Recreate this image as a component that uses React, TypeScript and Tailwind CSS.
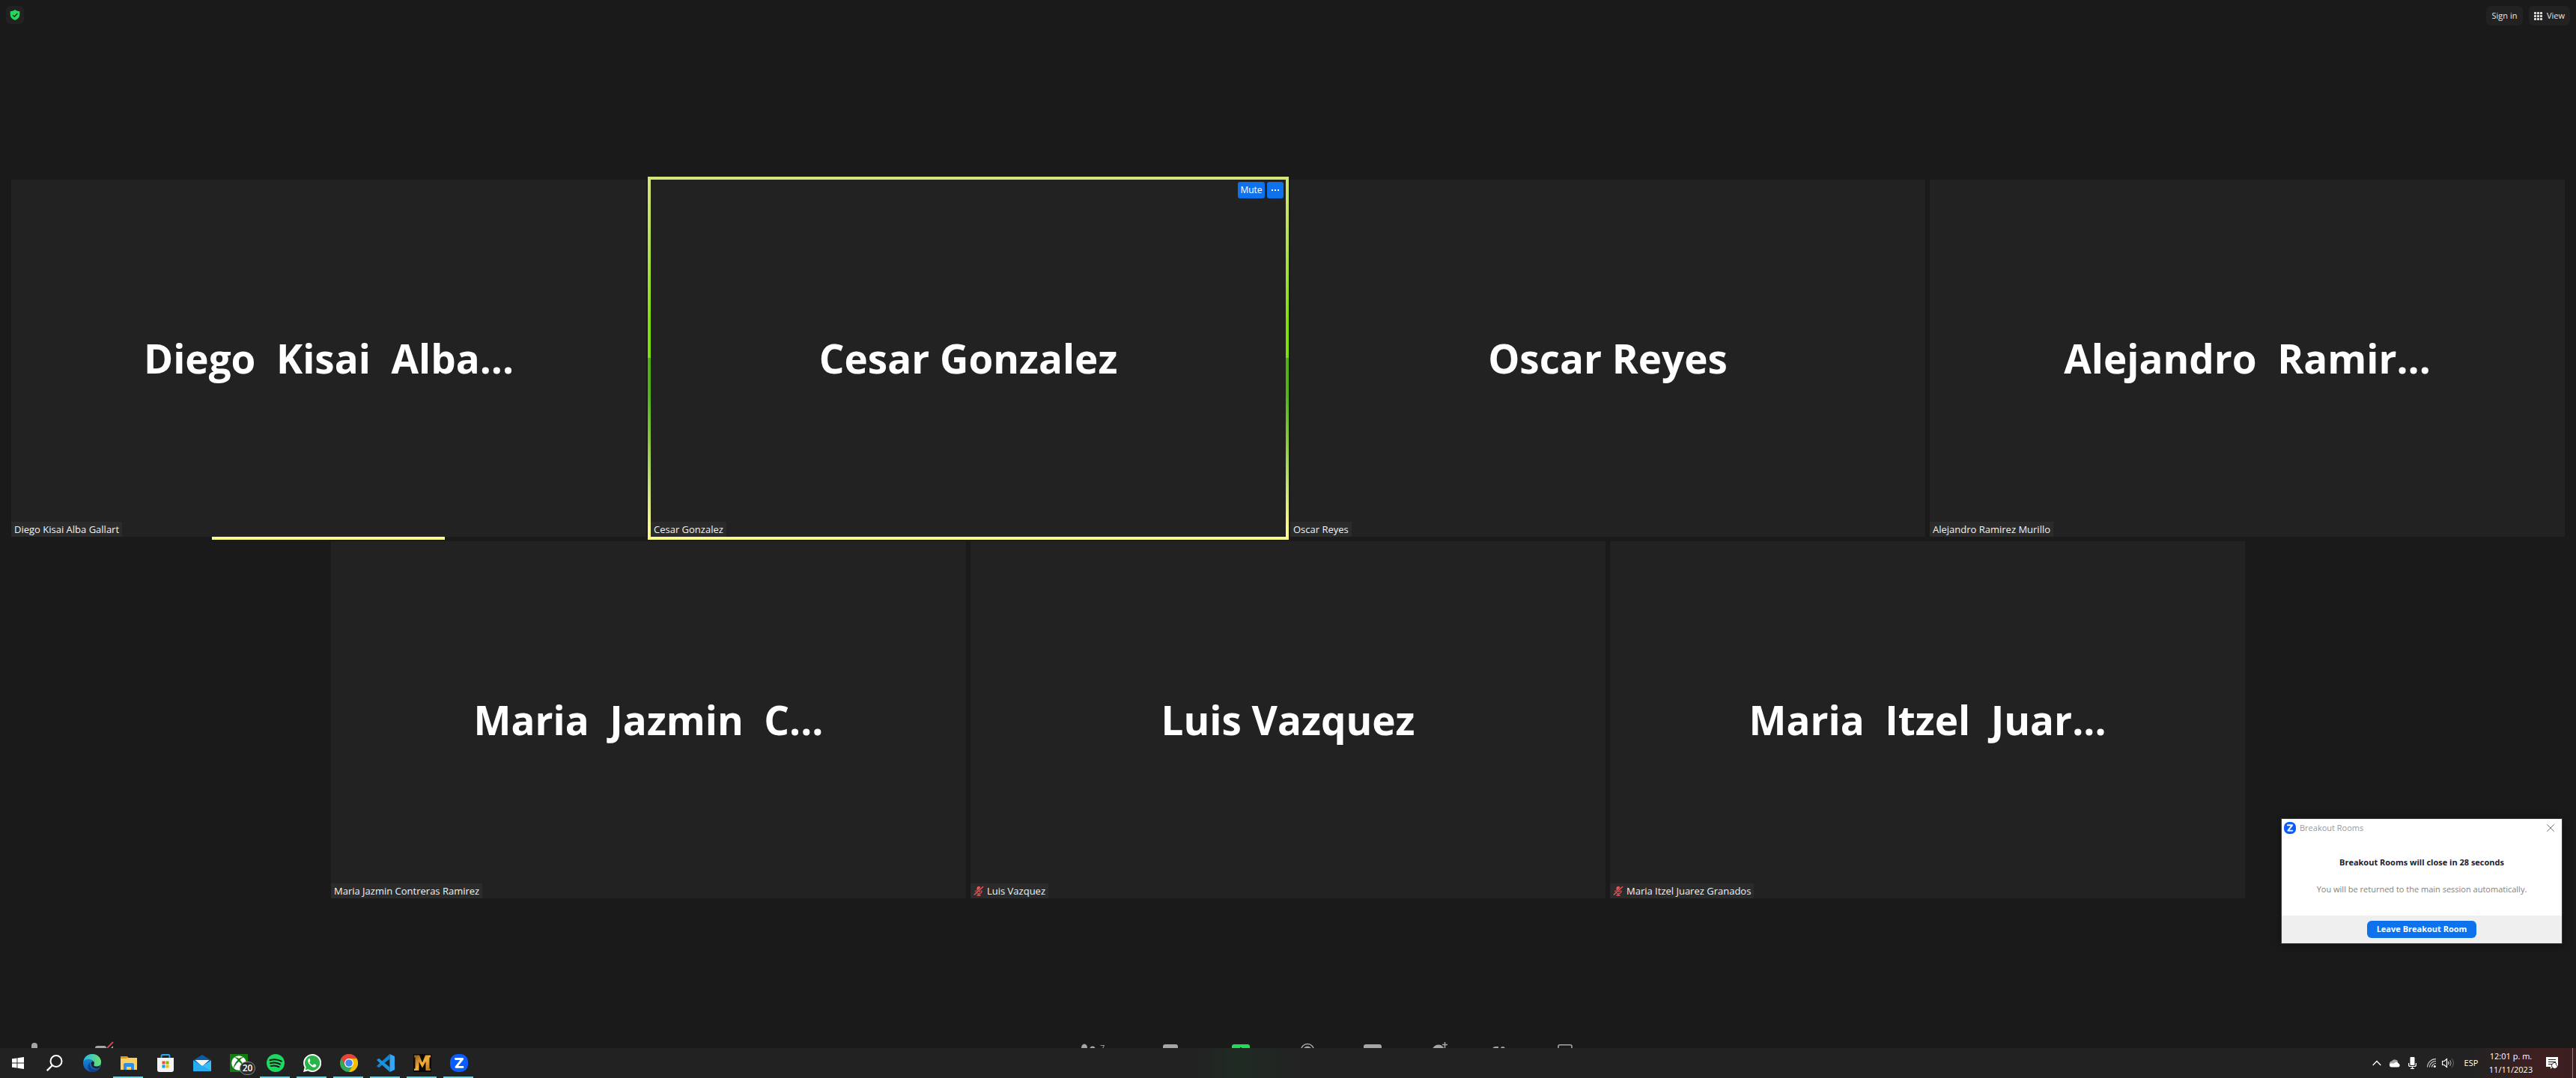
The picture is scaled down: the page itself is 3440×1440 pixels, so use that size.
import React from "react";

type Person = { name: string; title: string; muted?: boolean };

const topRow: Person[] = [
  { name: "Diego Kisai Alba Gallart", title: "Diego\u00a0 Kisai\u00a0 Alba..." },
  { name: "Cesar Gonzalez", title: "Cesar Gonzalez" },
  { name: "Oscar Reyes", title: "Oscar Reyes" },
  { name: "Alejandro Ramirez Murillo", title: "Alejandro\u00a0 Ramir..." },
];

const bottomRow: Person[] = [
  { name: "Maria Jazmin Contreras Ramirez", title: "Maria\u00a0 Jazmin\u00a0 C..." },
  { name: "Luis Vazquez", title: "Luis Vazquez", muted: true },
  { name: "Maria Itzel Juarez Granados", title: "Maria\u00a0 Itzel\u00a0 Juar...", muted: true },
];

function MutedMic() {
  return (
    <svg viewBox="0 0 14 14" className="h-3.5 w-3.5" aria-hidden="true">
      <rect x="4.5" y="1" width="5" height="8" rx="2.5" fill="#f0555a" />
      <path d="M3 6.5V7a4 4 0 0 0 8 0v-.5M7 11v2M4.5 13h5" fill="none" stroke="#f0555a" strokeWidth="1.3" />
      <path d="M.8 12.6 13 1.2" stroke="#2b2b2b" strokeWidth="2.6" />
      <path d="M.8 12.6 13 1.2" stroke="#f0555a" strokeWidth="1.4" />
    </svg>
  );
}

function Tile({ person, active, speaking }: { person: Person; active?: boolean; speaking?: boolean }) {
  return (
    <article className="relative flex aspect-[848/477] w-[calc((100%-18px)/4)] items-center justify-center bg-[#222222]">
      {active && (
        <>
          <div className="absolute -inset-1 bg-[linear-gradient(to_bottom,#d5e57a_0%,#c3e35a_12%,#9fe032_28%,#83dd0c_40%,#83dd0c_50%,#4fb30d_50%,#53b517_60%,#86c83a_72%,#c9e273_85%,#fbf88b_97%)]" />
          <div className="absolute inset-0 bg-[#222222]" />
          <div className="absolute right-[3px] top-[3px] flex gap-[3px] text-xs">
            <button className="h-[22px] w-9 rounded-[3px] bg-[#0e72ed] text-white">Mute</button>
            <button aria-label="More options" className="flex h-[22px] w-[22px] items-center justify-center gap-0.5 rounded-[3px] bg-[#0e72ed]">
              <i className="h-0.5 w-0.5 bg-white" />
              <i className="h-0.5 w-0.5 bg-white" />
              <i className="h-0.5 w-0.5 bg-white" />
            </button>
          </div>
        </>
      )}
      {speaking && <div className="absolute left-[268px] top-full h-1 w-[311px] bg-[#fdfb8e]" />}
      <h2 className="relative whitespace-nowrap text-[53px] font-bold leading-none text-white">{person.title}</h2>
      <div className="absolute bottom-0 left-0 flex h-5 items-center gap-1 bg-[#2b2b2b] px-1 text-[13px] leading-5 text-[#f2f2f2]">
        {person.muted && <MutedMic />}
        <span>{person.name}</span>
      </div>
    </article>
  );
}

function ZoomArt() {
  return (
    <>
      <rect width="24" height="24" rx="10" fill="#0b5cff" />
      <path d="M7.4 6.5h9.2l-8.6 10.900h9" fill="none" stroke="#fff" strokeWidth="2.9" strokeLinejoin="round" strokeLinecap="round" />
    </>
  );
}

const g = "#a6a6a6";
const tools = [
  { label: "Participants", w: "w-[100px]", art: <><ellipse cx="38" cy="14" rx="4" ry="5.5" fill={g} /><circle cx="49" cy="15" r="3.5" fill={g} /></> },
  { label: "Chat", w: "w-[106px]", art: <rect x="43" y="9" width="20" height="18" rx="3" fill={g} /> },
  { label: "Share Screen", w: "w-[82px]", art: <><rect x="29" y="9" width="24" height="18" rx="3" fill="#23d959" /><path d="M41 13v6" stroke="#1a1a1a" strokeWidth="2" /></> },
  { label: "Record", w: "w-[98px]", art: <><circle cx="48" cy="17" r="8.5" fill="none" stroke={g} strokeWidth="1.6" /><circle cx="48" cy="17" r="5.5" fill={g} /></> },
  { label: "Whiteboard", w: "w-[74px]", art: <rect x="25" y="9" width="24" height="18" rx="3" fill={g} /> },
  { label: "Reactions", w: "w-[106px]", art: <><circle cx="51" cy="18" r="8.5" fill={g} /><path d="M59.5 5.5v8M55.5 9.5h8" stroke="#1a1a1a" strokeWidth="4" /><path d="M59.5 6v8M56 9.5h7" stroke={g} strokeWidth="1.5" /></> },
  { label: "Apps", w: "w-[50px]", art: <path d="M18 16c0-2 1.5-3 3-3h4M28.5 16c0-2 .8-3 2.300-3s2.300 1 2.300 3" fill="none" stroke={g} strokeWidth="1.8" /> },
  { label: "Notes", w: "w-[128px]", art: <rect x="55" y="9.8" width="18" height="16" rx="2" fill="none" stroke={g} strokeWidth="1.6" /> },
];

function Toolbar() {
  return (
    <nav aria-label="Meeting controls" className="flex h-3.5 shrink-0 overflow-hidden">
      <button aria-label="Unmute" className="w-[92px]">
        <svg viewBox="0 0 92 14" className="h-3.5 w-full"><rect x="42" y="7" width="8" height="16" rx="4" fill={g} /></svg>
      </button>
      <button aria-label="Start Video" className="w-[92px]">
        <svg viewBox="0 0 92 14" className="h-3.5 w-full">
          <rect x="35" y="11" width="15" height="12" rx="3" fill={g} />
          <path d="M55 15l4-4v4z" fill={g} />
          <path d="M59 6 50 15" stroke="#e0484d" strokeWidth="1.8" />
        </svg>
      </button>
      <div className="mr-[60px] flex flex-1 justify-center">
        {tools.map((t, i) => (
          <button key={t.label} aria-label={t.label} className={t.w + " relative overflow-hidden"}>
            <svg width="100%" height="14" className="block">{t.art}</svg>
            {i === 0 && <span className="absolute left-[59px] top-[7px] text-[11px] leading-[14px] text-[#a6a6a6]">7</span>}
          </button>
        ))}
      </div>
    </nav>
  );
}

const apps: { label: string; open?: boolean; art: React.ReactNode }[] = [
  {
    label: "Edge",
    art: (
      <>
        <defs>
          <linearGradient id="eg" x1="0" x2="1"><stop offset="0" stopColor="#2bb5e8" /><stop offset="1" stopColor="#6be36a" /></linearGradient>
          <linearGradient id="eb" x1="0" x2="0" y1="0" y2="1"><stop offset="0" stopColor="#1c9ae0" /><stop offset="1" stopColor="#0b55b0" /></linearGradient>
        </defs>
        <circle cx="12" cy="12" r="12" fill="url(#eb)" />
        <path d="M.6 9.500C2 3.500 6.500 0 12 0c7 0 12 5 12 10.500 0 4-3 6-6 6-2.500 0-4-1-3.700-2 1.200-1.300 1-3.500-.3-5C11 6 4 5.500.6 9.500z" fill="url(#eg)" />
        <path d="M9 11c-1.500 5 2 9.500 7 9.800 2.600.1 4.500-.6 6-2C19.500 23 15 24.500 11 23.800 6 22 5.500 14.500 9 11z" fill="#0d3f8c" />
        <path d="M10.500 12c.5-1.700 2.300-2.600 3.800-1.500.6 1.400.5 2.900-.2 3.900-.3 1.200 1.300 2.300 3.700 2.300 2 0 3.600-.7 4.700-1.600l-.6 2.600c-3.600 3-11 1.800-11.400-5.700z" fill="#222" />
      </>
    ),
  },
  {
    label: "File Explorer",
    open: true,
    art: (
      <>
        <path d="M1 3h9l2 2.500H1z" fill="#d9920b" />
        <path d="M1 5h22v16H1z" fill="#fbcf63" />
        <path d="M1 3h8v3H1z" fill="#dd9a12" />
        <path d="M5 21v-7.500L6.500 12h11l1.500 1.500V21h-4v-4H9v4z" fill="#2f8fe0" />
      </>
    ),
  },
  {
    label: "Microsoft Store",
    art: (
      <>
        <path d="M6.500 7V2.500A1.500 1.500 0 0 1 8 1h8a1.500 1.500 0 0 1 1.500 1.500V7" fill="none" stroke="#23a9ee" strokeWidth="1.8" />
        <path d="M1 5h22v16a3 3 0 0 1-3 3H4a3 3 0 0 1-3-3z" fill="#f4f4f6" />
        <path d="M7.500 9.500h4v4h-4z" fill="#f25022" /><path d="M12.500 9.500h4v4h-4z" fill="#7fba00" />
        <path d="M7.500 14.500h4v4h-4z" fill="#00a4ef" /><path d="M12.500 14.500h4v4h-4z" fill="#ffb900" />
      </>
    ),
  },
  {
    label: "Mail",
    art: (
      <>
        <path d="M0 8.500 12 1l12 7.500V14H0z" fill="#0a5ba5" />
        <path d="M2.500 8h19L12 16.500z" fill="#f3f3f3" />
        <path d="M0 8.500 12 16l12 7H0z" fill="#1fa3ea" /><path d="M24 8.500V23L12 16z" fill="#38bdf5" />
        <path d="M0 8.500 24 23H0z" fill="#29abf0" />
      </>
    ),
  },
  {
    label: "Xbox",
    art: (
      <>
        <path d="M0 0h24v24H0z" fill="#107c10" />
        <circle cx="12" cy="12" r="9.8" fill="#fff" />
        <path d="M5.500 4.500C8 3.600 10.500 5 12 6c1.500-1 4-2.400 6.500-1.500-2 .5-4.500 2.500-5 3.500 3 3 6 8 5.500 11.500-1.500-4-5-8-7-9.500-2 1.500-5.500 5.500-7 9.500C4.500 16 7.500 11 10.500 8c-.5-1-3-3-5-3.500z" fill="#107c10" />
      </>
    ),
  },
  {
    label: "Spotify",
    open: true,
    art: (
      <>
        <circle cx="12" cy="12" r="12" fill="#1ed760" />
        <path d="M4.500 8.200c5-1.500 11-1 15.300 1.500M5 12.300c4.500-1.300 9.500-.7 13 1.400M5.700 16c3.700-1 7.700-.6 10.700 1.200" fill="none" stroke="#161616" strokeWidth="2" strokeLinecap="round" />
      </>
    ),
  },
  {
    label: "WhatsApp",
    open: true,
    art: (
      <>
        <path d="M12 0a12 12 0 0 0-10.300 18L0 24l6.200-1.600A12 12 0 1 0 12 0z" fill="#fff" />
        <path d="M12 2a10 10 0 0 0-8.300 15.500l-1 3.800 3.900-1A10 10 0 1 0 12 2z" fill="#28b446" />
        <path d="M8.800 6.500c-.4-.7-1.300-.6-1.900.1C4.500 9.500 8 14.500 11.500 16.700c3 1.700 5.300 1 5.800-1.200.2-.9 0-1-.6-1.300l-1.900-.9c-.5-.2-.7 0-1 .4l-.8 1c-.3.300-.6.300-1 .1-1.600-.8-2.900-2-3.700-3.500-.2-.4-.1-.6.200-.9.600-.7 1-1 .8-1.600z" fill="#fff" />
      </>
    ),
  },
  {
    label: "Chrome",
    open: true,
    art: (
      <>
        <circle cx="12" cy="12" r="12" fill="#34a853" />
        <path d="M1.600 6A12 12 0 0 1 22.400 6H12L6.800 15z" fill="#ea4335" />
        <path d="M22.400 6A12 12 0 0 1 12 24l5.200-9L12 6z" fill="#fbbc05" />
        <circle cx="12" cy="12" r="6" fill="#fff" /><circle cx="12" cy="12" r="4.8" fill="#4285f4" />
      </>
    ),
  },
  {
    label: "Visual Studio Code",
    open: true,
    art: (
      <>
        <path d="M17.500 0 24 3v18l-6.500 3z" fill="#35a7f2" />
        <path d="M17.500 0v6.500L3 18.200 0 16z" fill="#1584cf" /><path d="M17.500 24v-6.500L3 5.800 0 8z" fill="#1c93dd" />
      </>
    ),
  },
  {
    label: "Game",
    open: true,
    art: (
      <>
        <defs><linearGradient id="gm" x1="0" x2="1" y1="0" y2="1"><stop offset="0" stopColor="#8a5312" /><stop offset=".5" stopColor="#f5b03c" /><stop offset="1" stopColor="#b36d19" /></linearGradient></defs>
        <path d="M0 0h24v24H0z" fill="#0b0806" />
        <path d="M1 1.500h7l4 10 4-10h7v3h-1.500v15H23v2.500h-6.500V10L12 18.500 7.500 10v12H1v-2.500h1.500v-15H1z" fill="url(#gm)" />
      </>
    ),
  },
  { label: "Zoom", open: true, art: <ZoomArt /> },
];

function Taskbar() {
  return (
    <footer className="flex h-10 shrink-0 items-stretch bg-[linear-gradient(to_right,#222_0%,#222_46.5%,#1f2b22_48%,#222_50.5%,#222_96%,#3f2021_98.5%,#3b1e20_100%)] text-[11px] text-white">
      <button aria-label="Start" className="flex w-12 items-center justify-center">
        <svg viewBox="0 0 16 16" className="h-4 w-4" fill="#fff"><path d="M0 2.300 6.500 1.400v6.200H0zM7.400 1.300 16 0v7.600H7.400zM0 8.400h6.500v6.200L0 13.700zM7.400 8.400H16V16l-8.600-1.300z" /></svg>
      </button>
      <button aria-label="Search" className="flex w-[50px] items-center justify-center">
        <svg viewBox="0 0 22 22" className="h-[22px] w-[22px]" fill="none" stroke="#fff" strokeWidth="2"><circle cx="13" cy="8.5" r="7.5" /><path d="M8 14 .8 21.200" strokeWidth="2.3" /></svg>
      </button>
      {apps.map((a) => (
        <button key={a.label} aria-label={a.label} className="relative flex w-[49px] items-center justify-center">
          <svg viewBox="0 0 24 24" className="h-6 w-6">{a.art}</svg>
          {a.label === "Xbox" && <span className="absolute bottom-1 right-0.5 flex h-[18px] w-[21px] items-center justify-center rounded-full border border-[#8a8a8a] bg-[#2b2b2b] text-xs font-semibold leading-none">20</span>}
          {a.open && <i className="absolute bottom-0 left-1 h-0.5 w-10 bg-[#76d0dc]" />}
        </button>
      ))}
      <div className="ml-auto flex items-center">
        <button aria-label="Show hidden icons" className="mr-2.5">
          <svg viewBox="0 0 12 8" className="h-2 w-3"><path d="M.7 7 6 1.500 11.300 7" fill="none" stroke="#fff" strokeWidth="1.3" /></svg>
        </button>
        <button aria-label="OneDrive" className="mr-2.5">
          <svg viewBox="0 0 16 12" className="h-3 w-4"><path d="M1.500 9A3.500 3.500 0 0 1 4 3.500 5 5 0 0 1 12.500 4z" fill="#a5a5a5" /><path d="M3 11.500a2.700 2.700 0 0 1 0-5.300c1-.2 2 .1 2.800.5L10 4.500a4 4 0 0 1 3 2 2.700 2.700 0 0 1 0 5z" fill="#fff" /></svg>
        </button>
        <button aria-label="Microphone in use" className="mr-3.5">
          <svg viewBox="0 0 11 16" className="h-4 w-[11px]"><rect x="2.5" width="6" height="11" rx="1" fill="#fff" /><path d="M.6 8v2.500q0 2 2 2h5.800q2 0 2-2V8M5.500 12.500v3M3 15.400h5" fill="none" stroke="#fff" strokeWidth="1.2" /></svg>
        </button>
        <button aria-label="Wi-Fi" className="mr-2">
          <svg viewBox="0 0 12 12" className="h-3 w-3" fill="none" stroke="#dcdcdc" strokeWidth="1.1"><path d="M.6 11.500C.6 5.500 5.500.6 12 .6M3.500 11.500c0-4.500 3.500-8 8.500-8M6.500 11.500c0-3 2.500-5 5.500-5" /><circle cx="10.3" cy="10.5" r="1.5" fill="#fff" stroke="none" /></svg>
        </button>
        <button aria-label="Volume" className="mr-3">
          <svg viewBox="0 0 17 14" className="h-3.5 w-[17px]" fill="none" stroke="#fff"><path d="M.6 4.500h2.500L6.500 1.500v11L3.100 9.500H.6z" strokeWidth="1.2" /><path d="M8.500 5q1.300 2 0 4" /><path d="M10.800 3.200q2.600 3.800 0 7.600" stroke="#b5b5b5" /><path d="M13.200 1q4.600 6 0 12" stroke="#666" /></svg>
        </button>
        <button className="mr-[13px] w-5 text-[11px]">ESP</button>
        <time className="mr-[17px] w-[60px] text-center leading-[18px]">12:01 p. m.<br />11/11/2023</time>
        <button aria-label="Notifications" className="mr-[19px]">
          <svg viewBox="0 0 16 16" className="h-4 w-4"><path d="M0 0h16v13H9l-3 3v-3H0z" fill="#fff" /><path d="M3 3.500h10M3 6.500h10M3 9.500h5" stroke="#2b1c1d" strokeWidth="1.2" /><path d="M13.500 8a3 3 0 0 0 2 4 4 4 0 1 1-2-4z" fill="#fff" stroke="#2b1c1d" strokeWidth="1" /></svg>
        </button>
        <i className="mr-1 h-10 w-px bg-[#8d7f80]" />
      </div>
    </footer>
  );
}

function BreakoutDialog() {
  return (
    <section role="dialog" aria-labelledby="breakout-title" className="absolute bottom-[179px] right-[18px] w-[376px] border border-[#3c3c3c] bg-white text-[11px] shadow-[0_2px_12px_rgba(0,0,0,0.4)]">
      <header className="flex h-6 items-center pl-[3px] pr-2.5">
        <svg viewBox="0 0 24 24" className="h-4 w-4" aria-hidden="true"><ZoomArt /></svg>
        <h3 id="breakout-title" className="ml-[5px] text-[#999999]">Breakout Rooms</h3>
        <button aria-label="Close" className="ml-auto">
          <svg viewBox="0 0 10 10" className="h-2.5 w-2.5"><path d="M.3.3l9.400 9.400M9.700.3.300 9.700" stroke="#777" strokeWidth="1" /></svg>
        </button>
      </header>
      <div className="flex h-[105px] flex-col items-center gap-5 pt-[26px] leading-4">
        <p className="font-bold text-[#20202f]">Breakout Rooms will close in 28 seconds</p>
        <p className="text-[#828282]">You will be returned to the main session automatically.</p>
      </div>
      <div className="flex h-[37px] justify-center bg-[#efefef] pt-[7px]">
        <button className="h-[23px] rounded-md bg-[#0e72ed] px-[13px] font-bold text-white">Leave Breakout Room</button>
      </div>
    </section>
  );
}

export default function App() {
  return (
    <div className="relative flex h-screen flex-col overflow-hidden bg-[#1a1a1a] font-['Open_Sans',sans-serif]">
      <header className="flex h-[54px] shrink-0 items-start gap-2 p-2 text-[11px] text-[#e6e6e6]">
        <button aria-label="Meeting information" className="flex h-6 w-6 items-center justify-center rounded-md bg-[#222222]">
          <svg viewBox="0 0 14 14" className="h-3.5 w-3.5"><path d="M7 0c1.800 1.500 4 2 6.300 2v4.500C13.300 10 11 12.500 7 14 3 12.500.7 10 .7 6.500V2C3 2 5.200 1.500 7 0z" fill="#23d959" /><path d="M4 7.200l2.300 2.100L10.300 5" fill="none" stroke="#1d2b20" strokeWidth="1.5" /></svg>
        </button>
        <button className="ml-auto h-[26px] w-[49px] rounded-md bg-[#222222]">Sign in</button>
        <button className="flex h-[26px] w-[55px] items-center justify-center gap-1.5 rounded-md bg-[#222222]">
          <svg viewBox="0 0 11 11" className="h-[11px] w-[11px]" fill="#d8d8d8">
            {[0, 4, 8].map((y) => [0, 4, 8].map((x) => <rect key={x + "-" + y} x={x} y={y} width="3" height="3" rx=".5" />))}
          </svg>
          View
        </button>
      </header>
      <main className="flex flex-1 flex-col justify-center gap-1.5 px-[15px]">
        <div className="flex justify-center gap-1.5">
          {topRow.map((p, i) => <Tile key={p.name} person={p} active={i === 1} speaking={i === 0} />)}
        </div>
        <div className="flex justify-center gap-1.5">
          {bottomRow.map((p) => <Tile key={p.name} person={p} />)}
        </div>
      </main>
      <Toolbar />
      <Taskbar />
      <BreakoutDialog />
    </div>
  );
}
